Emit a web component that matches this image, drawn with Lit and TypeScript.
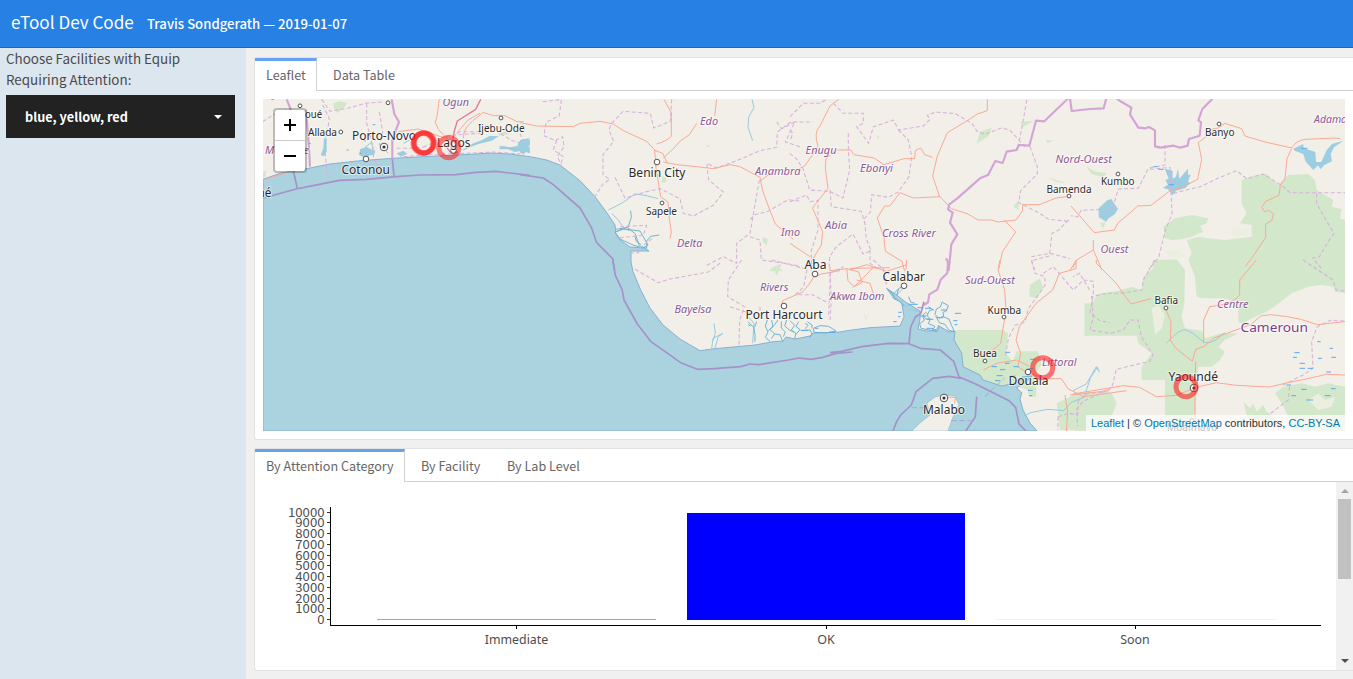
import { LitElement, html, svg, css } from "lit";
import { customElement } from "lit/decorators.js";

type Label = [string, number, number, number, string];

// text, left, baseline, width, style class
const LABELS: Label[] = [
  ["oué", 305, 117.5, 17, "town"], ["Allada", 308, 135.5, 29, "town"], ["Maritime", 265, 153.5, 44, "state"],
  ["Porto-Novo", 352, 140, 64, "city"], ["Cotonou", 341.5, 173.5, 48.5, "city"], ["Lomé", 240.5, 197, 31, "city"],
  ["Ogun", 442.5, 105.5, 26.5, "state"], ["Ijebu-Ode", 478, 132, 46.5, "town"], ["Lagos", 437, 146.5, 33.5, "city"],
  ["Edo", 700, 125, 18, "state"], ["Benin City", 628.5, 177, 57, "city"], ["Sapele", 646, 214.5, 31, "town"],
  ["Delta", 677, 247, 25.5, "state"], ["Anambra", 755, 174.5, 45.5, "state"], ["Imo", 781, 236, 19, "state"],
  ["Enugu", 805.5, 153.5, 31, "state"], ["Ebonyi", 860, 172, 33, "state"], ["Abia", 825, 229, 22, "state"],
  ["Cross River", 882, 237, 54, "state"], ["Aba", 804.5, 269, 22, "city"], ["Nord-Ouest", 1055.5, 162.5, 56.5, "state"],
  ["Bamenda", 1046.5, 192.5, 45, "town"], ["Banyo", 1205, 136, 29.5, "town"], ["Adamaoua", 1314, 123, 51, "state"],
  ["Kumbo", 1101, 185, 33.5, "town"], ["Ouest", 1100.5, 252.5, 28, "state"], ["Rivers", 760, 290.8, 28.5, "state"],
  ["Bayelsa", 674.5, 313, 37, "state"], ["Port Harcourt", 745.5, 318.8, 77, "city"], ["Akwa Ibom", 830, 300, 54.5, "state"],
  ["Calabar", 882.5, 281, 42.5, "city"], ["Sud-Ouest", 965, 284, 50, "state"], ["Kumba", 987.5, 313.5, 33.5, "town"],
  ["Buea", 973, 357.3, 24, "town"], ["Douala", 1008.5, 385, 40, "city"], ["Littoral", 1042, 365.5, 34.5, "state"],
  ["Malabo", 923, 414.3, 42, "city"], ["Bafia", 1154.5, 304, 23.5, "town"], ["Centre", 1217, 307.7, 31.5, "state"],
  ["Cameroun", 1240.5, 332, 67.5, "country"], ["Yaoundé", 1168.5, 380.5, 49.5, "city"], ["Mbalmayo", 1167, 430.5, 50, "town"],
];

// x, y, radius
const TOWNS: [number, number, number][] = [
  [300, 105.8, 1.9], [388, 102.8, 1.9], [340.8, 132, 1.9], [366, 159, 2.8], [501, 118, 1.9], [453.5, 150.5, 2.8],
  [657, 162, 2.8], [662, 203, 1.9], [815, 274, 2.8], [784, 306, 2.8], [904, 285.8, 2.8], [1004, 317, 1.9],
  [985, 361, 1.9], [1028, 372, 2.8], [1166, 308, 1.9], [1219, 124, 1.9], [1118, 174, 1.9], [1069, 196, 1.9], [1192, 420.5, 1.9],
];
const CAPITALS: [number, number][] = [[384, 147], [944, 398], [1194, 388]];
const RINGS: [number, number, number][] = [
  [423.5, 143, 0.5], [424.3, 142.7, 0.5], [423, 143.5, 0.35], [448.8, 147.7, 0.55], [1042.7, 367.7, 0.58], [1186, 386.7, 0.58],
];

interface Tile { x: number; y: number; wood?: string; glade?: string; lake?: string; stream?: string; creek?: string; minor?: string; admin?: string; road?: string; trunk?: string; frontier?: string; marine?: string; marsh?: string; }

// Each tile is drawn at three units per pixel from its own origin.
const TILES: Tile[] = [
  {
    x: 250, y: 90,
    wood: "M250 40l20-7 22 6-8 12-22 18-10-14zM38 245l12-4-4 20-8 2zM745 130l20-6 15 8-30 6z",
    lake: "M222 145l8 0 0 40-8 14-10-4 8-20zM330 178l20-8 12 8 14 4-4 14-14 0-10 14-10-10-10-4zM640 176l30-16 28-10 20-12 28 0-20 14-40 10-30 10-24 8zM750 168l30 4 22-4 6-14 16-6 16 2 0 16-14 4 14 10 0 10-12-4-8 8-12-10-14 2-20-8-26 0zM440 190l20-8 12 10-20 8z",
    stream: "M405 180l10 10M460 160l20-10M640 180l70-35M755 170l50 8 35 8M345 172l20-15 5 22M805 165l12-15 22-4",
    admin: "M38 95l35-22 35-14M215 28l25 36 55-10 50-14 50-4M218 45l20 40-6 40M350 40l0 60 14 50 8 60 28 30M388 66l10 60-10 40M228 130l-2 60 6 75M440 175l40 0 45-4M520 172l70-35 110-8M810 130l12 30-12 30M690 125l-60 0-30 24M752 130l30 20 30 10M460 200l80-6 100-4 90-4 80 6",
    road: "M445 125l60-8 40 14 30 10 30-6M568 28q-2 10-4 30t-8 40q8 24 22 34t24 28M640 145q0-20 10-34 20-22 36-32l12-12 33 10 34 0 36 18 20 0M620 130l34-40 36-20M38 270l40-12 35-12",
    trunk: "M692 28l-15 30-55 35-9 30-12 65M590 172l14 18 20-4",
    frontier: "M110 28l12 30-14 24 20 58 4 70M425 28l8 44 14 24-10 26-10 30 0 58M168 60l8 100 4 70",
    marine: "M38 325l100-28 70-14 60-12 80-3 90-8 70-5 110-1 60-7 60-3 102 12M130 243l12 52M427 208l5 50",
    marsh: "M64 28h8M176 160h6M340 152h8M368 104h8M328 190h6M290 180h6",
  },
  {
    x: 520, y: 90,
    wood: "M426 258l12 6 2 12-15 2zM556 168l14-4-6 8zM728 440l16 8-4 18-12-10z",
    lake: "M0 150l20-4 8 6-6 12 8 10-4 12-26-4z",
    stream: "M696 28l6 24-16 30-2 30 14 40M265 360l40-20 40-28 30 4 40 10M275 370l20 20 12 18",
    creek: "M332 362l2 20-10 30-36 6M322 412l24 20 12 35 22 8 0-22 12-14 26-4M290 425l20-10 18 6M345 440l4 14 14 10",
    admin: "M68 35l56-6-6 48-40 20-6 40 34 15 22-12 4 30-20 30 12 24M110 150l-10 30 30 20-10 30M455 28l-4 66-50 20-10-44-82-6-34 36-8 20 14 34-32 40 0 60 20 14-20 14-20 30-10 26M285 262l30 62 60-18 45-10 60 30 10 44 30 8 60-32 30-40-44-36-6-50 30 14 60-22 70-30 50-10 2-46 40-30 66 0M718 270l-14 80-14 80-40 30 0 60-40-20-50 26M690 388l14-14 40-10 60-35 34 4M690 440l30 10 4 60 70 10 46 8M770 96l15 20 40-20M840 170l-44-14 28-60M300 410l80-4-10 30-80 8M330 490l26-2 0-12 40-30",
    road: "M0 98l50 10 110 2 20-10 60-6 40 8 30 20 70 32 24 26 4 50M432 28l22 40 0 70q-10 14-44 24M590 28l-6 50M530 100l-22 34-26 18-22 24-30 28M402 180l26 10 14 30M406 220l16 100 22 16 4 50 6 40-4 20M430 216l40 8 60 6 50 6 50-12 30 6 60 32 8 40 22 60 16 40 54 46M722 272l24-18 20-16",
    marine: "M0 254l70 10 30 20 80 70 34 58 16 46 48 48 6 36",
  },
  {
    x: 790, y: 90,
    wood: "M570 125l36-12-10 24-36 24zM692 96l40-4-34 20zM770 150l20 2-18 8zM670 350l16-20 0 30zM770 260l60 20-30-4zM260 136l8 4-6 8z",
    admin: "M0 80l40-40 50 0 20-12M130 40l30 30 60 0 0 30-20 10 36 50 14-50 60-20 16 30 74-12 20-20-8-12 24-10 60 5 50 30 16 24 24 8 50-20 24 8 46 50M710 30l-10 60-14 72M325 120l30 30 10 50-8 60-32 46M325 306l-30 16-50-8-4 52-18 20 6 60 14 36-24 10-30-60-50 38-20 30-2 40M240 480l0 40 30 20M175 130l0 50 4 60-20 84-40-20-60-4-20-64-20-30-20-16M0 335l50-20 10 20 24-4 0 90-20 60 0 60M120 300l4 50 90 14 10 36M720 170l22 60 0 22-50 50-6 36 60 30 30 20 60 6M836 390l-30 30-20 10-8 68-54 14 10 28M724 500l56-10 60 16M0 120l8 10-8 24",
    road: "M146 28l-26 20-30 60q-20 20-6 60l-12 20-28 40-20 10-24 0M142 180l40 0 10 14 60 10 30 20 60-18 32 0 2-24 16-8 12 20 24 8M592 28l0 34-30 10-30 20-60 36-30 70-14 60 20 60 36 38 50 16 30 18 40 0 20 6 54-6 20-28 0-18 50 0 50-20 32-4M122 195l-14 10-2 30 8 60-40 50-6 10 30 70-4 40-30 50M450 320l-80 4-40-16-30 40-16 0-22 36 20 60 4 40 50 30 8 30M643 390l34 36-40 60-10 50M0 460l60 40M180 535l120-2",
    frontier: "M835 25l-72 69-25-2-20 75-32-2-6 15-30 5-12 34-22-6-22 42-24 10-68 60-24 18-4 15 14 10-8 30 22 35-18 30-8 80",
  },
  {
    x: 1070, y: 90,
    wood: "M50 230l24 14 36 6-10 12-36-10zM90 400l16-4-6 20z",
    lake: "M86 355l26-24 12-4 20 30-10 16-18 12-8 10-22-14zM284 236l24 6 0 24 10-6 6-24 4 30 26-30 0 18 8 0-8 20 6 6-14 14-28 8-10 14-14-18-16-4 16-10-8-14 10-4zM670 176l30-14 0 12 36 12 2 30 16 0 16-36 16-18 34-10-28 20-10 20 4 22-24 12-10 12-8-12-14 14-24-26-6-22-26-10z",
    admin: "M285 165l0 60-50 10-30 60-60 2-12 40 0 20-100 4-10 20-20-4M240 238l60-6 2 50 4 90-20 50-20 80-30 38M310 310l80-20 60-28 50-20 30 24 50-14 60 38 20 18 184 0M740 310l0 30 22 40 30 50-14 20-30 50-20 4 30 36",
    road: "M425 118l20-4 20-14 50 16 10 22 60 18 80 18q12-22 40-26l90-4 15 2M425 118l-14 20-26 20 10 50-12 60-50 26-30 6-60 46-40 2-20 18-40 34-10 20-60 8-70-80M665 176l-14 30-6 60-14 20-4 30-40 18-12 18 10 14 10-6 16 12-6 20-18 10 0 40-40 60-22 28M70 450l0 30 26 60M70 480l-50 30-20 30",
    frontier: "M0 25l5 38 56-6 40-2 8-30M140 25l10 8 34 20-4 20 25 40 22 2 10-4 18 10 0 48 16 4 40-6 20 6 22-6 4-20 32-10 4-40-8-6 12-34 30-30",
    marsh: "M250 230h12M266 238h14M296 284h16M694 175h18",
  },
  {
    x: 560, y: 260,
    wood: "M632 26l22-12 10-2-4 14 10 6-14 2-6 14-6-14-14 0z",
    creek: "M565 185l8 10 8 6 4 22 0 22M590 185l-6 16M572 198l-8-4M622 180l-6 18 8 18-8 16 14 12M635 180l4 20-14 12M654 180l-10 14-14 14 14 14 16 2 8 20M644 222l-10 14M664 184l0 20 12 12-6 14M680 180l-6 18 14 12 14 6M690 182l14 14-10 14 14 10-4 16M716 185l-8 14 12 10-12 14M742 185l14 10 0 10M726 212l24-2 6 12-6 10M760 205l20-8 26 2 22 14-30 6-36-2zM735 190l10 6-10 10",
    stream: "M455 265l4-30 30-15-14 10-10 34M462 190l4 30-6 20M578 250l4-60-15-18",
    marsh: "M722 211h22M765 205h10M808 217h18",
    admin: "M225 28l70 40 30-10 120-22 40-30M545 0l-40 60-2 50 50 30-14 40-2 74M810 20l0 50-4 100M745 10l-14 70-24 24 50 0 50 26M635 0l100 26M600 140l0 30M510 140l60 20",
    road: "M664 138l4-16 60-26 20-24 12-20 24-10 56-10",
    marine: "M158 0l8 46 20 42 6 32 40 72 40 52 90 64 50 20 50-2 80-6 28-8 25 2 90-14 32-6 36 4 35-6 40-12 50-4",
  },
  {
    x: 830, y: 260,
    wood: "M380 210h140l14 10-6 60 20 24 12-30h64l10 40-20 30 4 60-40-20-20-10-50 10-58-20-10-18-60-26-2-38-22-34zM600 75l30-20 10 30-20 30-22-5zM680 430l40-20 20-12 40 10 30-10 30 20v92H690zM95 145l12 30 12-20-12 24zM590 380l30 0-2 30-20 0z",
    stream: "M170 85l20 30 25 10 12 16M195 110l20-20 4-14M235 145l30 10M565 370l14-18 24 0M582 468l20-10 50-10 50 4 20-24 40-16 20-60 20-30 6 14M220 140l20-5M350 214l5 6",
    creek: "M172 88l16 12 4 16 16 8 14 14M192 100l14-14 10-6M206 86l-6 20M236 110l6 16 12 4",
    admin: "M0 180l4-60-4-90M0 40l40-20M130 0l30 28 10 50M605 0l10 40 30 10 0 26-50 70-10 40-30 10-20 40-10 60M640 40l30-20 60 70 30-30 30 4 0 40-10 54 30 24 30 6M684 470l0 40M684 470l30-10 30 4 0-40 30-24 66-5",
    road: "M0 32l50-6 4 36 18 18 20-18 40-42M50 26l36 10 10 32-28 14M60 30l50-16 60 20 60-20M80 60l40 10 10 30M230 0l-2 30M510 0l-6 30 20 60 4 60-16 100-24 20 0 24M738 0l0 26-50 14-20 50-50 40-50 70-10 40 14 40-8 40 30 20 60 16 40 0 20 30 46 24 130-18M460 330l40-20 60-10 36 18M705 405l8 50-4 60M720 405l90-10 30-6M330 412l46 0-2 18",
    frontier: "M348 -5l6 12-2 32-20 20-10 30-24 14-4 24-12 8",
    marine: "M0 278l35-4 60-14 80-10 62 1 5-50 14-30 16-10 10-36M237 251l34 14 60 5 40 34 16 46 50 22 60 30 40 20 20 20 10 50 24 24M188 515l12-30 12-20 32-30 14-40 50-40 50-6 36 6M440 410l-4 60-30 45",
    minor: "M245 443h42M364 482h60M466 410l18-20 40-36",
    marsh: "M235 133h28M262 143h18M285 145h18M333 150h18M375 160h18M270 168h20M290 178h20M320 173h20M370 182h12M374 194h8M290 205h20M526 277h14M600 298h14M525 310h14M550 320h16M485 320h16M510 329h16M595 326h14M500 347h18M538 347h18M495 362h16M540 372h18M594 391h14M597 407h10M205 157h10M204 170h8M190 185h10",
  },
  {
    x: 885, y: 265,
    creek: "M172 110l-6 16-12 6-4 16 12 12 12-6M172 112l18 10-6 16-10 4 2 14 16 6 8 20 8 18-16-4-12-18-16-4-12-20M146 134l-12 2-8 16 10 10-6 14 20 8-8 12 14 4M104 176l4 14 30 6 20-4 2-12M104 176l14-10-6-14 10-10 8 8M130 125l15 10M114 150l8 12 14 0",
  },
  {
    x: 1073, y: 260,
    stream: "M280 250q40-46 60-40 20 6 44 30t66-18l6-4M0 392l40-20 30-52 8 14",
    admin: "M245 0l-34 60-4 30-66 10-40 0-46 10 6 60-10 40 60 10 40-10 20-30 24 0 10 50 35 54-10 20-100 24-14 56-20 10-66 30-20 24 4 50M50 90l-30-50-20 10M690 0l90 60 10 30 30 4M630 375l60-30 30-20-4-80 16-44 40-20 44 2M650 380l-4 40-60 45",
    road: "M550 0l-50 60 0 44q-10 20-60 32l-30 4-18 40 0 70M70 0l0 10 60 60 20 30 24 32 60-16M395 258l28-24 110-40 30-26 30-4 50 6 40 8 50 16 90-10M278 146l16 40-2 54 16 24 50 40 10-36 28-10M368 304l-2 124 0 85M0 402l150-25 50 5 50 28 60-4 60-24 60-14 60 8 100 5 50-12 60-12 60-14 115 4M10 0l-10 24",
    marsh: "M664 278h16M660 292h12M680 310h16M680 325h16M733 245h10M770 265h10M775 292h14M735 295h12M704 325h16M760 336h14M685 388h16M655 407h14M755 407h18M700 420h20M640 375h14M774 386h14",
  },
  {
    x: 1075, y: 170,
    wood: "M500 30L545 15 575 12 610 45 640 15 700 12 720 30 725 60 750 75 775 90 770 110 800 118 795 145 810 150V370L780 365 775 350 740 345 700 350 650 370 612 400 575 425 540 440 500 462 490 455 490 395 440 385 380 385 365 380 360 320 340 270 350 250 335 210 370 200 400 205 450 210 530 200 530 165 495 160 515 130 500 100zM265 170L300 145 350 135 400 145 395 160 375 168 385 185 350 200 320 208 290 210 270 205zM235 270L305 268 330 300 328 400 320 440 330 475 380 482 390 505 440 490 490 490 450 510 430 530 450 545 435 570 410 590 370 590 362 640 362 720 350 745 330 780H270V630H200V590L230 550 190 520 185 497H28V400H50L70 372 130 362 170 350 200 360 205 320 235 295zM620 700L600 670 625 650 680 640 720 650 760 640 810 650V782H660L640 740zM0 690L40 665 110 670 125 700 110 740 90 782H0zM505 695l20 20 10-15 10 25 20-20 10 20 30 20-20 30-60 0z",
    glade: "M470 178l20-10 10 10 16-6 14 16-14 10-20-4-12 8-18-10zM265 240l50 0 20 20-50 4zM700 690l30-20 20 20 30-10-10 30-40 10zM230 415l20-10 20 30-10 40-20 20z",
  },
];

const COAST =
  "M263 179.3L280 173.3 305 169 330 164 360 160.7 393 158.3 423 156.7 457 155 493 153 510 154 530 156.7 546.7 160 560 165 580 180.7 595 196.7 607 213 615 225 616 234 620 240 630 247 644 248 649 251 631 251 631 262 633 271.7 640.7 290 650 308 663 325 680 339 700 350.7 711.7 349 755 345 773 341.7 783 341 786 337 795 339 810 336 813 333 840 332 846.7 330.7 870 327.7 900 326 904 316.7 901.7 303 894 297 886.7 288.3 898 296 905 301.7 913 306.7 920 311 920 319 918 329 926 331 938 330.7 939 326 946 330 950 332 955 331 954 340 961.7 353.3 963 366.7 980 375 983 380 1001.7 386 1016.7 382.7 1022 377 1032 376 1026 382 1016.7 388 1021.7 393 1020 399 1023 410 1030 423 1037 431H263Z";

@customElement("facility-map")
export class FacilityMap extends LitElement {
  static styles = css`
    :host { display: block; position: relative; width: 1082px; height: 332px; overflow: hidden; }
    svg { display: block; }
    .label { font-family: "Noto Sans", "Open Sans", sans-serif; fill: #2b2b2b; stroke: #fff; stroke-opacity: .6; stroke-width: 2px; stroke-linejoin: round; paint-order: stroke; }
    .city { font-size: 12.5px; }
    .town { font-size: 10.5px; }
    .state { font-size: 11px; font-style: italic; fill: #8d5a95; }
    .country { font-size: 12.5px; fill: #7b3f88; }
    .line { fill: none; stroke-linejoin: round; }
    .wood { fill: #d3e7cb; }
    .glade { fill: #ecefdf; }
    .lake { fill: #9ccde0; }
    .stream { stroke: #96cade; stroke-width: 3; }
    .creek { stroke: #64b1cf; stroke-width: 2.8; }
    .admin { stroke: #d6b2d9; stroke-width: 3.2; stroke-dasharray: 12 7; }
    .minor { stroke: #a79ccd; stroke-width: 2.5; stroke-dasharray: 16 8; }
    .road { stroke: #fba893; stroke-width: 3; }
    .trunk { stroke: #e5779a; stroke-width: 4; }
    .frontier { stroke: #d3a4d5; stroke-width: 6.5; }
    .marine { stroke: #a691c9; stroke-width: 5; }
    .marsh { stroke: #5ba8ee; stroke-width: 3; }
    .town-dot { fill: #fff; stroke: #555; stroke-width: 1; }
    .ring { fill: none; stroke: #ff1717; stroke-width: 5; }
    .zoom { position: absolute; left: 10px; top: 9px; width: 30px; border: 2px solid rgba(0,0,0,.22); border-radius: 4px; background: #fff; background-clip: padding-box; }
    .btn { display: flex; align-items: center; justify-content: center; height: 30px; }
    .btn + .btn { border-top: 1px solid #ccc; height: 30px; }
    .credit { position: absolute; right: 0; bottom: 0; padding: 0 5px; background: rgba(255,255,255,.7); font: 11px/16px "Liberation Sans", Arial, sans-serif; color: #333; white-space: nowrap; }
    .link { color: #0078a8; }
  `;

  private line(kind: string, d?: string) {
    return d ? svg`<path class="line ${kind}" d=${d}></path>` : null;
  }

  private area(kind: string, d?: string) {
    return d ? svg`<path class=${kind} d=${d}></path>` : null;
  }

  private group(parts: (t: Tile) => unknown) {
    return TILES.map((t) => svg`<g transform="translate(${t.x} ${t.y}) scale(.33333)">${parts(t)}</g>`);
  }

  render() {
    return html`
      <svg width="1082" height="332" viewBox="263 99 1082 332">
        <rect x="263" y="99" width="1082" height="332" fill="#f2efe9"></rect>
        ${this.group((t) => svg`${this.area("wood", t.wood)}${this.area("glade", t.glade)}`)}
        <path d=${COAST} fill="#aad3df" stroke="#7fa9d0" stroke-width=".9"></path>
        <path d="M911.7 431L920 423 930 415 927 403 935 397 943 395 955 396 959 405 953 417 948 431Z" fill="#f2efe9" stroke="#8bb9d0" stroke-width=".6"></path>
        <path d="M615 232l9-3 16 2 8 14-5 3-10-3-13-6z" fill="#f2efe9" stroke="#4fa6c6" stroke-width=".8"></path>
        ${this.group((t) => svg`
          ${this.area("lake", t.lake)}
          ${this.line("stream", t.stream)}${this.line("creek", t.creek)}
          ${this.line("admin", t.admin)}${this.line("minor", t.minor)}
          ${this.line("road", t.road)}${this.line("trunk", t.trunk)}
          ${this.line("frontier", t.frontier)}${this.line("marine", t.marine)}
          ${this.line("marsh", t.marsh)}`)}
        ${TOWNS.map(([x, y, r]) => svg`<circle class="town-dot" cx=${x} cy=${y} r=${r}></circle>`)}
        ${CAPITALS.map(([x, y]) => svg`<circle class="town-dot" cx=${x} cy=${y} r="3.8"></circle><circle cx=${x} cy=${y} r="1.6" fill="#333"></circle>`)}
        ${LABELS.map(([text, x, y, w, kind]) => svg`<text class="label ${kind}" x=${x} y=${y} textLength=${w} lengthAdjust="spacingAndGlyphs">${text}</text>`)}
        ${RINGS.map(([x, y, o]) => svg`<circle class="ring" cx=${x} cy=${y} r="10" stroke-opacity=${o}></circle>`)}
      </svg>
      <div class="zoom">
        <div class="btn"><svg width="14" height="14"><path d="M1 7h12M7 1v12" stroke="#000" stroke-width="2"></path></svg></div>
        <div class="btn"><svg width="14" height="14"><path d="M1 7h12" stroke="#000" stroke-width="2"></path></svg></div>
      </div>
      <div class="credit"><span class="link">Leaflet</span> | © <span class="link">OpenStreetMap</span> contributors, <span class="link">CC-BY-SA</span></div>
    `;
  }
}

@customElement("category-chart")
export class CategoryChart extends LitElement {
  static styles = css`
    :host { display: block; }
    svg { display: block; }
    .tick { font: 12px "Noto Sans CJK SC", sans-serif; fill: #4d4d4d; }
    .name { font: 12.2px "Noto Sans", sans-serif; fill: #4d4d4d; }
  `;

  render() {
    const ticks = Array.from({ length: 11 }, (_, i) => i * 1000);
    return html`
      <svg width="1081" height="188" viewBox="255 482 1081 188" shape-rendering="crispEdges">
        <path d="M330.5 507V625.5H1321M516.5 626v3M826.5 626v3M1135.5 626v3" fill="none" stroke="#000"></path>
        ${ticks.map((v, i) => {
          const y = 619.5 - i * 10.75;
          return svg`<path d="M327 ${Math.floor(y)}.5h3" stroke="#333"></path><text class="tick" x="324.5" y=${y + 4.5} text-anchor="end" textLength=${String(v).length * 7.3} lengthAdjust="spacingAndGlyphs">${v}</text>`;
        })}
        <path d="M377 619.5H656" stroke="#fb8080"></path>
        <rect x="687" y="513" width="278" height="107" fill="#00f"></rect>
        <path d="M996 619.5H1275" stroke="#ffff90"></path>
        <text class="name" x="516.5" y="644" text-anchor="middle" textLength="63.5" lengthAdjust="spacingAndGlyphs">Immediate</text>
        <text class="name" x="826" y="644" text-anchor="middle" textLength="17.5" lengthAdjust="spacingAndGlyphs">OK</text>
        <text class="name" x="1135" y="644" text-anchor="middle" textLength="29.5" lengthAdjust="spacingAndGlyphs">Soon</text>
      </svg>`;
  }
}

@customElement("app-root")
export class AppRoot extends LitElement {
  static styles = css`
    :host { display: flex; flex-direction: column; height: 679px; overflow: hidden; background: #f0f0f0; font-family: "Noto Sans CJK SC", "Noto Sans", sans-serif; color: #444; }
    * { box-sizing: border-box; }
    .bar { display: flex; align-items: baseline; flex: none; height: 48px; padding-left: 11px; background: #2780e3; border-bottom: 1px solid #1967be; color: #fff; line-height: 44px; white-space: nowrap; }
    .brand { width: 136px; font-size: 17.1px; }
    .sub { font-size: 13.15px; font-weight: 500; }
    .body { display: flex; flex: 1; min-height: 0; }
    .side { flex: none; width: 246px; padding: 0 11px 0 6px; background: #dce6ef; }
    .prompt { font-size: 13.4px; line-height: 21px; height: 47px; white-space: nowrap; color: #4a4a4a; }
    .select { display: flex; align-items: center; justify-content: space-between; height: 43px; padding: 0 13px 0 19px; background: #222; color: #fff; font-size: 12.7px; font-weight: 700; }
    .caret { border: 4px solid transparent; border-top-color: #fff; border-bottom: 0; }
    .main { display: flex; flex-direction: column; flex: 1; min-width: 0; padding: 9px 0 0 8px; gap: 8px; }
    .card { flex: none; background: #fff; border: 1px solid #e2e2e2; border-right: 0; border-radius: 3px 0 0 3px; }
    .top { height: 383px; }
    .bottom { height: 223px; }
    .tabs { display: flex; height: 33px; }
    .tab { display: flex; align-items: center; border-bottom: 1px solid #d3d3d3; color: #666; font-size: 12.6px; line-height: 20px; padding-top: 2px; white-space: nowrap; }
    .on { border-top: 3px solid #66a3ec; border-right: 1px solid #d3d3d3; border-bottom: 0; padding: 0 0 2px 11px; }
    .rest { flex: 1; border-bottom: 1px solid #d3d3d3; }
    .leaf { width: 62px; } .attn { width: 150px; }
    .data { width: 120px; padding-left: 16px; }
    .fac { width: 102px; padding-left: 16px; }
    .lab { width: 100px; }
    .map { padding: 8px 0 0 8px; }
    .scroller { display: flex; height: 188px; }
    .track { display: flex; flex-direction: column; align-items: center; width: 17px; background: #f1f1f1; }
    .up { margin-top: 7px; border: 4px solid transparent; border-top: 0; border-bottom-color: #a3a3a3; }
    .thumb { width: 13px; height: 80px; margin-top: 6px; background: #c1c1c1; }
    .down { margin-top: auto; margin-bottom: 7px; border: 4px solid transparent; border-bottom: 0; border-top-color: #505050; }
  `;

  render() {
    return html`
      <header class="bar"><span class="brand">eTool Dev Code</span><span class="sub">Travis Sondgerath — 2019-01-07</span></header>
      <div class="body">
        <aside class="side">
          <div class="prompt">Choose Facilities with Equip<br />Requiring Attention:</div>
          <div class="select"><span>blue, yellow, red</span><span class="caret"></span></div>
        </aside>
        <main class="main">
          <section class="card top">
            <nav class="tabs"><div class="tab on leaf">Leaflet</div><div class="tab data">Data Table</div><div class="rest"></div></nav>
            <div class="map"><facility-map></facility-map></div>
          </section>
          <section class="card bottom">
            <nav class="tabs"><div class="tab on attn">By Attention Category</div><div class="tab fac">By Facility</div><div class="tab lab">By Lab Level</div><div class="rest"></div></nav>
            <div class="scroller">
              <category-chart></category-chart>
              <div class="track"><div class="up"></div><div class="thumb"></div><div class="down"></div></div>
            </div>
          </section>
        </main>
      </div>`;
  }
}
